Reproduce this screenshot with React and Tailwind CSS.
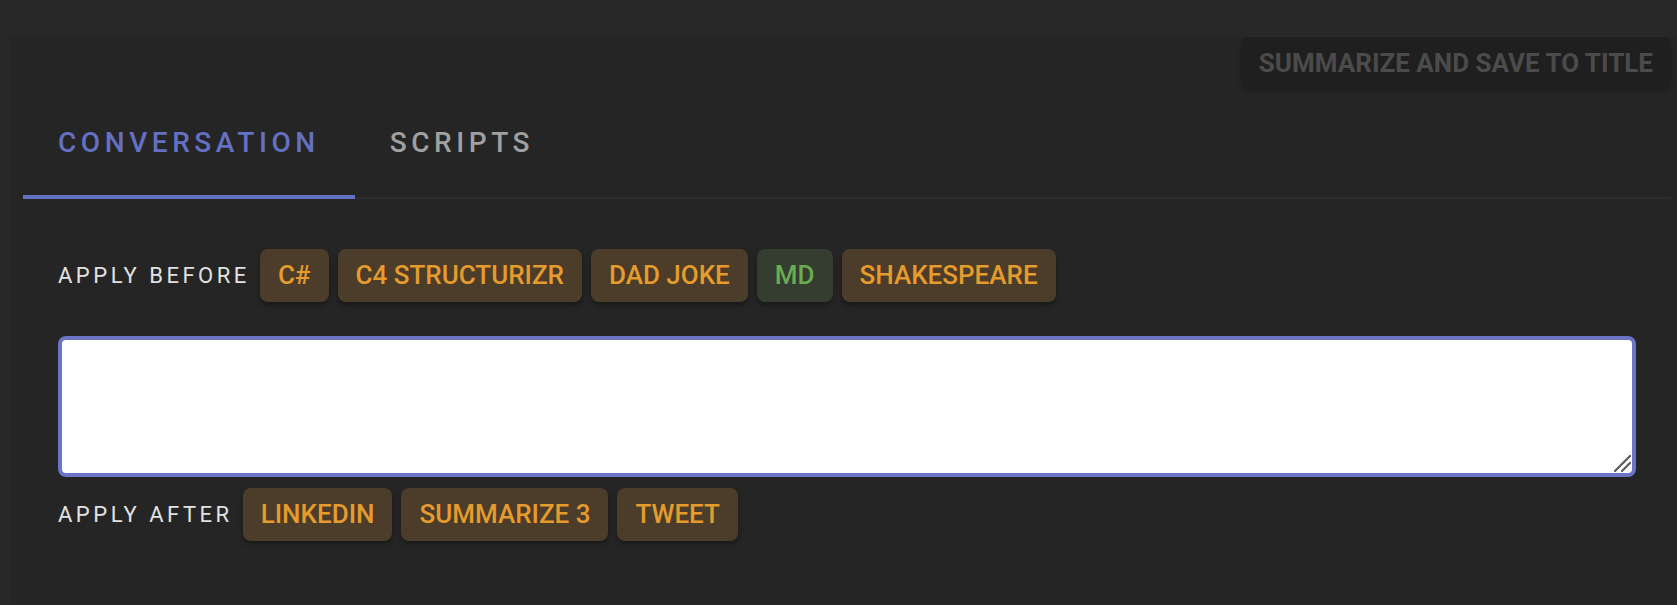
import { useState } from "react";

const beforeScripts = [
  { label: "C#", tone: "orange" },
  { label: "C4 Structurizr", tone: "orange" },
  { label: "Dad Joke", tone: "orange" },
  { label: "MD", tone: "green" },
  { label: "Shakespeare", tone: "orange" },
];

const afterScripts = [
  { label: "LinkedIn", tone: "orange" },
  { label: "Summarize 3", tone: "orange" },
  { label: "Tweet", tone: "orange" },
];

const ScriptChip = ({ label, tone }) => (
  <button
    className={
      tone === "green"
        ? "flex items-center h-[53px] px-[18px] rounded-[8px] bg-[#343d30] text-[#6aab51] text-[26px] font-medium uppercase shadow-[0_3px_5px_rgba(0,0,0,0.35)] cursor-pointer"
        : "flex items-center h-[53px] px-[18px] rounded-[8px] bg-[#4b3d29] text-[#e69b2d] text-[26px] font-medium uppercase shadow-[0_3px_5px_rgba(0,0,0,0.35)] cursor-pointer"
    }
  >
    {label}
  </button>
);

const ScriptRow = ({ title, scripts, className }) => (
  <div className={`flex items-center gap-[10px] ${className}`}>
    <span className="text-[22px] uppercase tracking-[0.16em] text-[#e2e2e2]">{title}</span>
    <div className="flex gap-[9px]">
      {scripts.map((s) => (
        <ScriptChip key={s.label} label={s.label} tone={s.tone} />
      ))}
    </div>
  </div>
);

export default function App() {
  const [tab, setTab] = useState(0);
  const [prompt, setPrompt] = useState("");

  return (
    <main
      className="w-full h-[605px] bg-[#282828] pt-[37px] pl-[11px]"
      style={{ fontFamily: "Roboto, 'Noto Sans', sans-serif" }}
    >
      <div className="h-full bg-[#252525] pl-[12px] pr-[6px]">
        <div className="flex justify-end">
          <button className="h-[53px] px-[18px] rounded-[8px] bg-[#1f1f1f] text-[#4b4b4b] text-[26px] font-bold uppercase shadow-[0_2px_4px_rgba(0,0,0,0.2)]">
            Summarize and save to title
          </button>
        </div>

        <div className="flex border-b-[2px] border-[#2e2e2e]">
          {["Conversation", "Scripts"].map((name, i) => (
            <button
              key={name}
              onClick={() => setTab(i)}
              className="flex flex-col cursor-pointer"
            >
              <span
                className={
                  i === tab
                    ? "flex items-center justify-center h-[105px] px-[35px] text-[28px] font-medium uppercase tracking-[0.163em] text-[#6471c3]"
                    : "flex items-center justify-center h-[105px] px-[35px] text-[28px] font-medium uppercase tracking-[0.163em] text-[#a0a0a0]"
                }
              >
                {name}
              </span>
              <span className={i === tab ? "h-[4px] -mb-[2px] bg-[#6471c3]" : "h-[4px] -mb-[2px]"} />
            </button>
          ))}
        </div>

        <div className="px-[35px] pt-[50px]">
          <ScriptRow title="Apply before" scripts={beforeScripts} />
          <div className="relative mt-[34px]">
            <textarea
              value={prompt}
              onChange={(e) => setPrompt(e.target.value)}
              className="block w-full h-[141px] rounded-[8px] border-[4px] border-[#6b74c6] bg-white text-black text-[22px] p-2 outline-none resize-none"
            />
            <svg
              className="absolute right-[5px] bottom-[5px] pointer-events-none"
              width="20"
              height="20"
              viewBox="0 0 20 20"
            >
              <path d="M19 4 L4 19 M19 11 L11 19" stroke="#5a5a5a" strokeWidth="2.2" strokeLinecap="round" />
            </svg>
          </div>
          <ScriptRow title="Apply after" scripts={afterScripts} className="mt-[11px]" />
        </div>
      </div>
    </main>
  );
}
